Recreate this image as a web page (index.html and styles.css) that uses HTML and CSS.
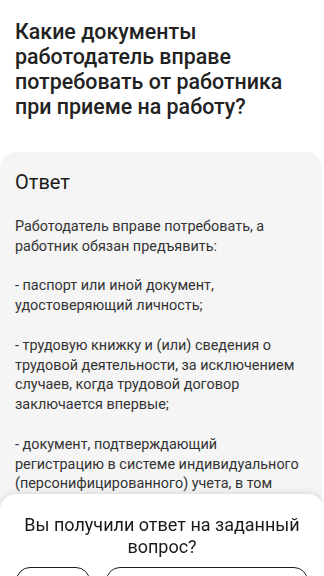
FILE: index.html
```html
<!DOCTYPE html>
<html lang="ru">
<head>
<meta charset="utf-8">
<title>Вопрос</title>
<link rel="stylesheet" href="styles.css">
</head>
<body>
<main class="page">
  <h1 class="title">Какие документы работодатель вправе потребовать от работника при приеме на работу?</h1>
  <section class="card">
    <h2 class="card-title">Ответ</h2>
    <div class="answer">
      <p>Работодатель вправе потребовать, а работник обязан предъявить:</p>
      <p>- паспорт или иной документ, удостоверяющий личность;</p>
      <p>- трудовую книжку и (или) сведения о трудовой деятельности, за исключением случаев, когда трудовой договор заключается впервые;</p>
      <p>- документ, подтверждающий регистрацию в системе индивидуального (персонифицированного) учета, в том числе в форме электронного документа;</p>
    </div>
  </section>
</main>
<div class="sheet">
  <p class="sheet-question">Вы получили ответ на заданный вопрос?</p>
  <div class="sheet-actions">
    <button class="btn btn-no" aria-label="Нет"></button>
    <button class="btn btn-yes" aria-label="Да"></button>
  </div>
</div>
</body>
</html>
```
FILE: styles.css
```css
* { box-sizing: border-box; }
html, body {
  margin: 0;
  padding: 0;
  background: #ffffff;
  font-family: Roboto, "Noto Sans", sans-serif;
  color: #1e1e1e;
}
.page {
  display: flex;
  flex-direction: column;
}
.title {
  margin: 0;
  padding: 19px 15px 0 15px;
  font-size: 21.4px;
  line-height: 25px;
  font-weight: 500;
  color: #222222;
}
.card {
  margin-top: 33px;
  margin-right: 2px;
  background: #f5f5f5;
  border-radius: 16px 16px 0 0;
  padding: 18px 15px 40px 15px;
}
.card-title {
  margin: 0;
  font-size: 20px;
  line-height: 24px;
  font-weight: 400;
  color: #1a1a1a;
}
.answer {
  margin-top: 23px;
  font-size: 14.4px;
  line-height: 19.8px;
  color: #333333;
}
.answer p {
  margin: 0 0 19.8px 0;
}
.sheet {
  position: fixed;
  left: 0;
  right: 0;
  top: 494px;
  height: 120px;
  background: #ffffff;
  border-radius: 16px 16px 0 0;
  box-shadow: 0 -1px 6px rgba(0, 0, 0, 0.12);
  padding: 20px 16px 0 16px;
}
.sheet-question {
  margin: 0;
  text-align: center;
  font-size: 18px;
  line-height: 22px;
  font-weight: 400;
  color: #1a1a1a;
  padding: 0 8px;
}
.sheet-actions {
  display: flex;
  gap: 16px;
  margin-top: 9px;
}
.btn {
  height: 48px;
  background: #ffffff;
  border: 1.5px solid #1c1c28;
  border-radius: 14px;
}
.btn-no { width: 74px; }
.btn-yes { flex: 1; }
```
